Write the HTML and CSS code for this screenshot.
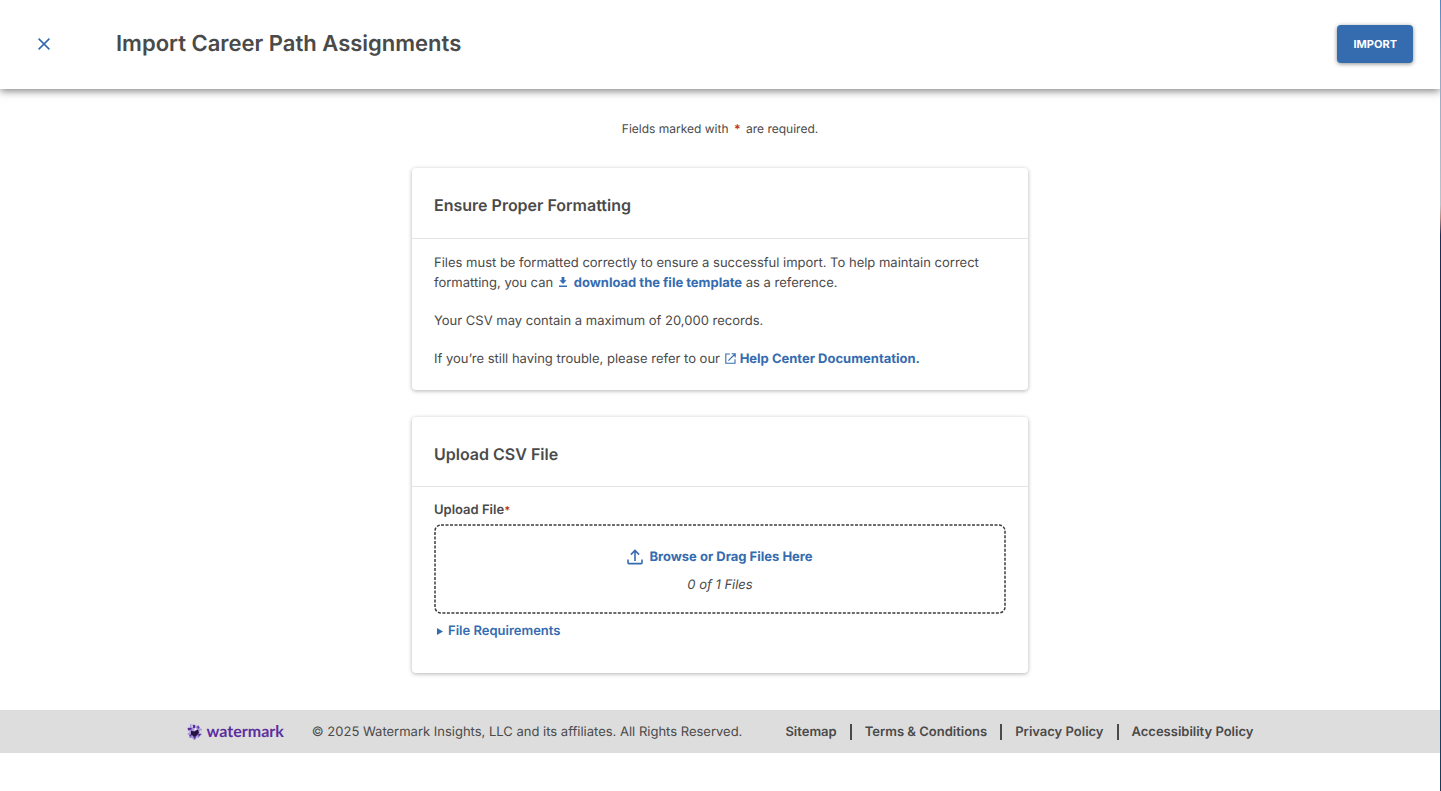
FILE: index.html
```html
<!DOCTYPE html>
<html lang="en">
<head>
<meta charset="utf-8">
<title>Import Career Path Assignments</title>
<link rel="stylesheet" href="styles.css">
</head>
<body>
<div class="page">
  <header class="topbar">
    <button class="close" type="button" aria-label="Close">
      <svg width="14" height="14" viewBox="0 0 14 14" fill="none" stroke="currentColor" stroke-width="1.6"><path d="M1.6 1.6 12.4 12.4M12.4 1.6 1.6 12.4"/></svg>
    </button>
    <h1 class="title">Import Career Path Assignments</h1>
    <button class="import" type="button">IMPORT</button>
  </header>
  <main class="content">
    <p class="required-note">Fields marked with <span class="star">*</span> are required.</p>
    <section class="card">
      <h2 class="card-title">Ensure Proper Formatting</h2>
      <div class="card-body">
        <p class="text">Files must be formatted correctly to ensure a successful import. To help maintain correct formatting, you can <a class="link" href="#template"><svg class="icon-download" width="10" height="10" viewBox="0 0 10 10" fill="currentColor"><path d="M3.6 0h2.8v3.2h2.2L5 7 1.4 3.2h2.2zM1 8.5h8V10H1z"/></svg>download the file template</a> as a reference.</p>
        <p class="text">Your CSV may contain a maximum of 20,000 records.</p>
        <p class="text">If you’re still having trouble, please refer to our <a class="link" href="#help"><svg class="icon-external" width="11" height="11" viewBox="0 0 11 11" fill="none" stroke="currentColor" stroke-width="1.1"><path d="M4.8 1H.8v9.2H10V6.2M6.6.8h3.6v3.6M10 1 3.4 7.6"/></svg>Help Center Documentation.</a></p>
      </div>
    </section>
    <section class="card">
      <h2 class="card-title upload-title">Upload CSV File</h2>
      <div class="card-body upload-body">
        <div class="label" id="upload-label">Upload File<span class="star small">*</span></div>
        <div class="dropzone" role="group" aria-labelledby="upload-label">
          <svg class="dashes"><rect class="dash-line" rx="6"/></svg>
          <button class="browse" type="button">
            <svg width="16" height="16" viewBox="0 0 16 16" fill="none" stroke="currentColor" stroke-width="1.6"><path d="M1 10.5v3.2q0 .9.9.9h12.2q.9 0 .9-.9v-3.2M8 12V1.8M3.9 5.6 8 1.5l4.1 4.1"/></svg>
            Browse or Drag Files Here
          </button>
          <p class="count">0 of 1 Files</p>
        </div>
        <details class="requirements">
          <summary class="summary"><svg width="6" height="7" viewBox="0 0 6 7" fill="currentColor"><path d="M0 0 6 3.5 0 7z"/></svg>File Requirements</summary>
        </details>
      </div>
    </section>
  </main>
  <footer class="footer">
    <div class="brand">
      <svg width="15" height="16" viewBox="0 0 15 16"><path fill="#a898d8" d="M7 0l2 2 3-1 0 3 3 1-1 3 1 3-3 1 0 2-3 0-2 2-2-2-3 0 0-3-2-1 1-3-1-3 3-1 0-3 3 1z"/><path fill="#ddd" d="M4 1l2 1-1 2zM0 6l3 2-3 2zM9 16l1-3 3 2zM14 6l1 4-3-2z"/><path fill="#5b2e9e" d="M6 1l2 0 0 3-2 0zM1 4l4 0-1 2-3 0zM2 11l3-1-1 3zM6 12l3 0-1 4zM11 10l3 0-2 3zM10 2l3 1-2 2z"/><path fill="#241340" d="M4 6.500l3 1 2-1 2-1 1 3-2 3-3 1-3-2z"/><path fill="#fff" d="M7 7l1-3 2 1z"/></svg>
      <span class="wordmark">watermark</span>
    </div>
    <p class="copyright">© 2025 Watermark Insights, LLC and its affiliates. All Rights Reserved.</p>
    <nav class="footer-nav">
      <a href="#sitemap">Sitemap</a>
      <a href="#terms">Terms &amp; Conditions</a>
      <a href="#privacy">Privacy Policy</a>
      <a href="#accessibility">Accessibility Policy</a>
    </nav>
  </footer>
</div>
<div class="edge"></div>
</body>
</html>
```
FILE: styles.css
```css
* { box-sizing: border-box; }
body {
  margin: 0;
  display: flex;
  min-height: 100vh;
  background: #fff;
  color: #4a4a4a;
  font-family: Inter, "Liberation Sans", sans-serif;
  font-size: 13px;
  line-height: 20px;
  text-rendering: geometricPrecision;
}
h1, h2, p { margin: 0; }
button { border: 0; background: none; padding: 0; font: inherit; text-rendering: inherit; cursor: pointer; }
svg { flex: none; }
.page { flex: 1; min-width: 0; overflow: hidden; }
.edge {
  width: 1px;
  background: linear-gradient(#4a87cc, #8fa6c6 60px, #b9c4cc 205px, #b08a80 218px, #1b2c5a 235px, #1d2440 400px, #1f5c84 480px, #173a5c);
}
.topbar {
  display: flex;
  align-items: center;
  height: 89px;
  padding: 0 27px 1px 37px;
  box-shadow: 0 2px 8px rgba(0, 0, 0, .5);
}
.close { display: flex; color: #356caf; }
.title {
  flex: 1;
  margin-left: 65px;
  font-size: 22px;
  font-weight: 600;
  line-height: 28px;
}
.import {
  height: 38px;
  padding: 0 16px;
  border-radius: 4px;
  background: #356caf;
  color: #fff;
  font-size: 11px;
  font-weight: 700;
  box-shadow: 0 1px 4px rgba(0, 0, 0, .45);
}
.content {
  display: flex;
  flex-direction: column;
  gap: 27px;
  width: 100%;
  max-width: 616px;
  margin: 0 auto;
  padding: 30px 0 37px;
}
.required-note { margin-bottom: 2px; font-size: 12px; text-align: center; }
.star { margin: 0 2px; color: #c3352b; font-weight: 700; }
.star.small { margin: 0; font-size: 11px; }
.card {
  border-radius: 4px;
  background: #fff;
  box-shadow: 0 1px 4px rgba(0, 0, 0, .3);
}
.card-title {
  padding: 25px 22px 21px;
  border-bottom: 1px solid #e4e4e4;
  font-size: 16px;
  font-weight: 600;
  line-height: 24px;
}
.upload-title { padding-bottom: 20px; }
.card-body {
  display: flex;
  flex-direction: column;
  gap: 18px;
  padding: 14px 22px 21px;
}
.link { color: #356caf; font-weight: 700; text-decoration: none; }
.icon-download { margin: 0 6px 0 1px; }
.icon-external { margin: 0 4px 0 1px; vertical-align: -1px; }
.upload-body { gap: 4px; padding: 13px 22px 32px; }
.label { font-weight: 600; }
.dropzone {
  position: relative;
  display: flex;
  flex-direction: column;
  align-items: center;
  gap: 8px;
  padding: 23px 0 19px;
}
.dashes {
  position: absolute;
  inset: 0;
  width: 100%;
  height: 100%;
  overflow: visible;
  pointer-events: none;
}
.dash-line {
  x: 1px;
  y: 1px;
  width: calc(100% - 2px);
  height: calc(100% - 2px);
  fill: none;
  stroke: #3c3c3c;
  stroke-width: 1.5;
  stroke-dasharray: 3 1.5;
}
.browse {
  display: flex;
  align-items: center;
  gap: 6px;
  color: #356caf;
  font-weight: 700;
}
.count { font-style: italic; }
.requirements { padding-top: 3px; }
.summary {
  display: flex;
  align-items: center;
  gap: 5px;
  padding-left: 3px;
  color: #356caf;
  font-weight: 600;
  list-style: none;
  cursor: pointer;
}
.footer {
  display: flex;
  justify-content: center;
  align-items: center;
  height: 43px;
  background: #ddd;
}
.brand { display: flex; align-items: center; gap: 5px; color: #5b2e9e; }
.wordmark { font-family: Lato, sans-serif; font-size: 16px; font-weight: 700; }
.copyright { margin: 0 43px 0 28px; }
.footer-nav { display: flex; }
.footer-nav a {
  color: #4a4a4a;
  font-weight: 600;
  line-height: 16px;
  text-decoration: none;
}
.footer-nav a + a { margin-left: 13px; padding-left: 13px; border-left: 2px solid #4a4a4a; }
```
